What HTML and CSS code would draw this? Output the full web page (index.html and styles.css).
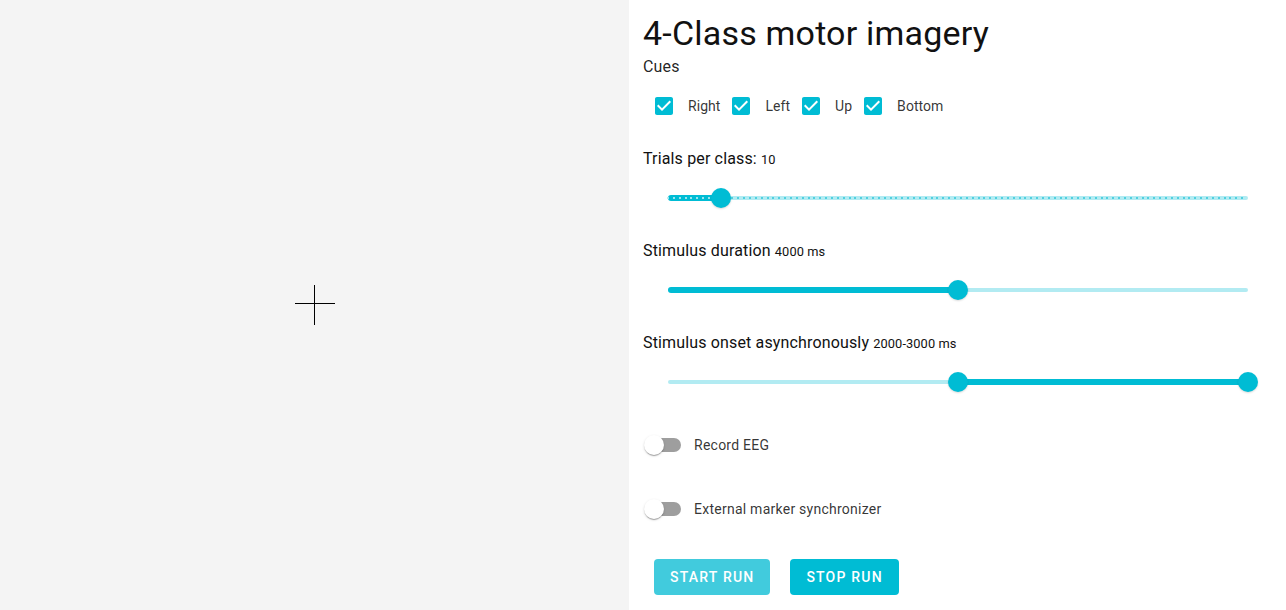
FILE: index.html
```html
<!DOCTYPE html>
<html>
<head>
<meta charset="utf-8">
<link rel="stylesheet" href="styles.css">
</head>
<body>
<main class="app">
  <section class="stage">
    <svg class="cross" width="40" height="40" viewBox="0 0 40 40"><rect x="0" y="18" width="40" height="1" fill="#000"/><rect x="19" y="0" width="1" height="40" fill="#000"/></svg>
  </section>
  <section class="panel">
    <h1 class="title">4-Class motor imagery</h1>
    <div class="subtitle">Cues</div>
    <div class="cues">
      <label class="check"><span class="check-box"><svg viewBox="0 0 24 24" width="24" height="24"><path fill="#00bcd4" d="M19 3H5c-1.11 0-2 .9-2 2v14c0 1.1.89 2 2 2h14c1.11 0 2-.9 2-2V5c0-1.1-.89-2-2-2zm-9 14l-5-5 1.41-1.41L10 14.17l7.59-7.59L19 8l-9 9z"/></svg></span><span class="check-label">Right</span></label>
      <label class="check"><span class="check-box"><svg viewBox="0 0 24 24" width="24" height="24"><path fill="#00bcd4" d="M19 3H5c-1.11 0-2 .9-2 2v14c0 1.1.89 2 2 2h14c1.11 0 2-.9 2-2V5c0-1.1-.89-2-2-2zm-9 14l-5-5 1.41-1.41L10 14.17l7.59-7.59L19 8l-9 9z"/></svg></span><span class="check-label">Left</span></label>
      <label class="check"><span class="check-box"><svg viewBox="0 0 24 24" width="24" height="24"><path fill="#00bcd4" d="M19 3H5c-1.11 0-2 .9-2 2v14c0 1.1.89 2 2 2h14c1.11 0 2-.9 2-2V5c0-1.1-.89-2-2-2zm-9 14l-5-5 1.41-1.41L10 14.17l7.59-7.59L19 8l-9 9z"/></svg></span><span class="check-label">Up</span></label>
      <label class="check"><span class="check-box"><svg viewBox="0 0 24 24" width="24" height="24"><path fill="#00bcd4" d="M19 3H5c-1.11 0-2 .9-2 2v14c0 1.1.89 2 2 2h14c1.11 0 2-.9 2-2V5c0-1.1-.89-2-2-2zm-9 14l-5-5 1.41-1.41L10 14.17l7.59-7.59L19 8l-9 9z"/></svg></span><span class="check-label">Bottom</span></label>
    </div>

    <div class="field first">
      <div class="field-label">Trials per class: <span class="value">10</span></div>
      <div class="slider">
        <div class="rail"></div>
        <div class="marks"></div>
        <div class="track" style="left:0%;width:9.09%"></div>
        <div class="marks active" style="width:9.09%"></div>
        <div class="thumb" style="left:9.09%"></div>
      </div>
    </div>

    <div class="field">
      <div class="field-label">Stimulus duration <span class="value">4000 ms</span></div>
      <div class="slider">
        <div class="rail"></div>
        <div class="track" style="left:0%;width:50%"></div>
        <div class="thumb" style="left:50%"></div>
      </div>
    </div>

    <div class="field">
      <div class="field-label">Stimulus onset asynchronously <span class="value">2000-3000 ms</span></div>
      <div class="slider">
        <div class="rail"></div>
        <div class="track" style="left:50%;width:50%"></div>
        <div class="thumb" style="left:50%"></div>
        <div class="thumb" style="left:100%"></div>
      </div>
    </div>

    <label class="toggle first-toggle"><span class="switch"><span class="switch-track"></span><span class="switch-thumb"></span></span><span class="toggle-label">Record EEG</span></label>
    <label class="toggle"><span class="switch"><span class="switch-track"></span><span class="switch-thumb"></span></span><span class="toggle-label">External marker synchronizer</span></label>

    <div class="actions">
      <button class="btn btn-light">Start run</button>
      <button class="btn">Stop run</button>
    </div>
  </section>
</main>
</body>
</html>
```

FILE: styles.css
```css
* { box-sizing: border-box; }
html, body { margin: 0; padding: 0; }
body {
  font-family: Roboto, "Liberation Sans", sans-serif;
  color: rgba(0,0,0,0.87);
  background: #fff;
  overflow: hidden;
}
.app {
  display: flex;
  height: 610px;
}
.stage {
  width: 629px;
  flex: none;
  background: #f4f4f4;
  display: flex;
  align-items: center;
  justify-content: center;
}
.cross { display: block; }
.panel {
  flex: 1;
  padding: 12px 0 0 14px;
  display: flex;
  flex-direction: column;
  align-items: flex-start;
}
.title {
  margin: 0;
  font-size: 34px;
  font-weight: 400;
  line-height: 42px;
  letter-spacing: 0.2px;
  color: #111;
}
.subtitle {
  font-size: 16px;
  line-height: 24px;
  letter-spacing: 0.15px;
  margin-top: 1px;
}
.cues {
  display: flex;
  margin-top: 6px;
}
.check {
  display: flex;
  align-items: center;
  height: 42px;
}
.check-box {
  padding: 9px;
  display: flex;
}
.check-box svg { display: block; }
.check-label {
  font-size: 14px;
  letter-spacing: 0.05px;
  margin-left: 3px;
  color: rgba(0,0,0,0.8);
}
.field {
  align-self: stretch;
  margin-top: 26px;
}
.field.first { margin-top: 20px; }
.field-label {
  font-size: 16px;
  line-height: 24px;
  letter-spacing: 0.15px;
  color: #111;
}
.value {
  font-size: 12.8px;
  line-height: 1;
  letter-spacing: 0.1px;
}
.slider {
  position: relative;
  height: 30px;
  margin: 12px 38px 0 25px;
}
.rail {
  position: absolute;
  left: 0; right: 0;
  top: 13px;
  height: 4px;
  border-radius: 2px;
  background: #00bcd4;
  opacity: 0.3;
}
.track {
  position: absolute;
  top: 12px;
  height: 6px;
  border-radius: 3px;
  background: #00bcd4;
}
.marks {
  position: absolute;
  top: 14px;
  left: -1px;
  width: 100%;
  height: 2px;
  background-image: repeating-linear-gradient(to right, #4fd0e0 0, #4fd0e0 2px, transparent 2px, transparent 5.8586px);
}
.marks.active {
  background-image: repeating-linear-gradient(to right, rgba(255,255,255,0.6) 0, rgba(255,255,255,0.6) 2px, transparent 2px, transparent 5.8586px);
}
.thumb {
  position: absolute;
  top: 50%;
  width: 20px;
  height: 20px;
  border-radius: 50%;
  background: #00bcd4;
  transform: translate(-50%, -50%);
  box-shadow: 0 1px 2px rgba(0,0,0,0.15);
}
.toggle {
  display: flex;
  align-items: center;
  margin-left: -8px;
  margin-top: 26px;
}
.toggle.first-toggle { margin-top: 29px; }
.switch {
  position: relative;
  width: 58px;
  height: 38px;
  padding: 12px;
  display: block;
  flex: none;
}
.switch-track {
  display: block;
  width: 34px;
  height: 14px;
  border-radius: 7px;
  background: #000;
  opacity: 0.38;
}
.switch-thumb {
  position: absolute;
  left: 9px;
  top: 9px;
  width: 20px;
  height: 20px;
  border-radius: 50%;
  background: #fff;
  box-shadow: 0 2px 1px -1px rgba(0,0,0,0.2), 0 1px 1px 0 rgba(0,0,0,0.14), 0 1px 3px 0 rgba(0,0,0,0.12);
}
.toggle-label {
  font-size: 14px;
  letter-spacing: 0.25px;
  color: rgba(0,0,0,0.8);
  margin-left: 1px;
}
.actions {
  display: flex;
  gap: 20px;
  margin-top: 31px;
  margin-left: 11px;
}
.btn {
  font-family: Roboto, "Liberation Sans", sans-serif;
  font-size: 14px;
  font-weight: 500;
  letter-spacing: 1.2px;
  text-transform: uppercase;
  color: #fff;
  background: #00bcd4;
  border: none;
  border-radius: 4px;
  height: 36px;
  padding: 0 16px;
  box-shadow: none;
}
.btn-light { background: #41cbdd; }
```
